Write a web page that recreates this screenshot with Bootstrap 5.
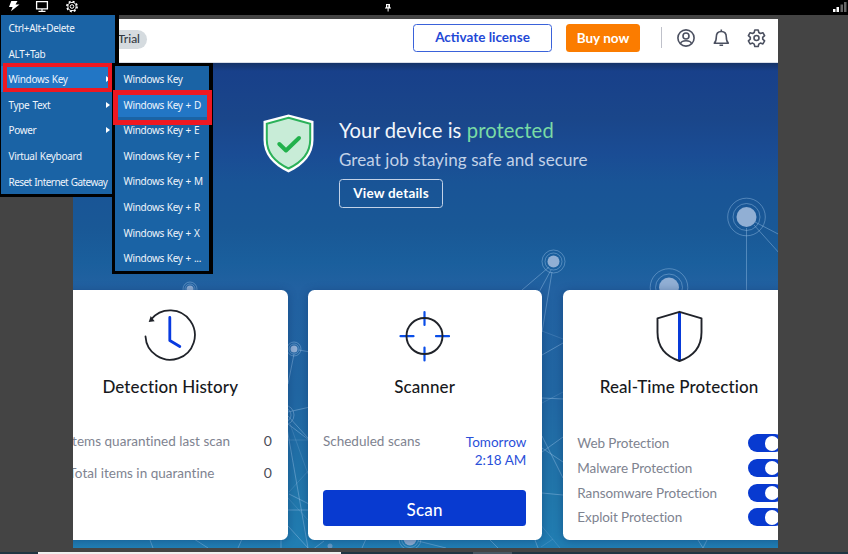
<!DOCTYPE html>
<html lang="en">
<head>
<meta charset="utf-8">
<title>Remote session</title>
<link href="https://cdn.jsdelivr.net/npm/bootstrap@5.3.0/dist/css/bootstrap.min.css" rel="stylesheet">
<script defer src="https://cdn.jsdelivr.net/npm/bootstrap@5.3.0/dist/js/bootstrap.bundle.min.js"></script>
<style>
body{width:848px;height:554px;background:#444;font-family:Lato,"Liberation Sans",sans-serif;font-variant-ligatures:none;line-height:1.2}
svg{display:block;flex:none}
.session-bar{height:15px;background:#000;padding-left:8px}
.remote-app{width:705px;height:529px;margin:4px 0 0 73px}
.app-top{height:44px;padding:0 12px 6px 0;border-bottom:1px solid #d9dee8}
.trial{height:19px;width:74px;margin-top:3px;background:#d5dbdf;color:#343a42;font-size:12px;font-weight:500;padding-right:7px}
.app-btn{--bs-btn-padding-x:0;--bs-btn-padding-y:0;--bs-btn-font-size:13.5px;--bs-btn-font-weight:700;--bs-btn-line-height:1;--bs-btn-border-radius:3.5px;height:28px}
.btn-activate{--bs-btn-color:#1f49d6;--bs-btn-border-color:#3a62da;width:139px;padding-top:1px}
.btn-buy{--bs-btn-bg:#fb7c00;--bs-btn-color:#fff;width:74px;margin-left:14px;padding-top:2px}
.top-rule{width:1px;height:21px;margin:0 15px 0 21px;background:#bfc1ca}
.hero-zone{height:485px;background:linear-gradient(#153368 0,#18408a 8px,#1a468a 55px,#1a4c94 90px,#195496 120px,#195896 165px,#1a5f9d 200px,#2261a1 225px,#2166a2 330px,#2176aa 430px,#217eb3 485px)}
.net-lines{inset:0}
.status-block{padding:50px 0 0 190px;gap:24px;height:227px}
.status-title{font-size:20.2px;line-height:34px;letter-spacing:.1px;color:#f2f6fb}
.status-title span{color:#79dba5}
.status-sub{font-size:17px;line-height:25px;letter-spacing:.08px;color:#c3d2e7}
.btn-view{--bs-btn-color:#fff;--bs-btn-border-color:#c3d2e7;width:104px;height:29px;letter-spacing:.2px;margin-top:7px;padding-top:1px}
.tile-row{gap:20.4px;margin-left:-19px}
.tile{width:234px;height:249.5px;border-radius:6.5px;background:#fff;padding:19px 16px 14px 14.5px;flex:none;box-shadow:0 1px 9px rgba(10,45,100,.4)}
.tile-title{font-size:17px;font-weight:500;line-height:22px;color:#17191d;margin:13px 0 0;letter-spacing:.1px}
.rows{font-size:13.5px;color:#7e8390;letter-spacing:.02px}
.quarantine-first{margin:35px 0 15px}
.schedule{margin-top:35px}
.shields{margin:33px -3px 0 0}
.num{color:#4a4d57;font-size:14px}
.when{color:#2a50d9;line-height:18px}
.btn-scan{--bs-btn-bg:#083ad0;--bs-btn-color:#fff;--bs-btn-font-size:17px;--bs-btn-font-weight:500;height:35.5px;letter-spacing:.2px;padding-top:3px}
.rt-row{height:24.65px;letter-spacing:-.08px}
.toggle{width:36px;height:18px;border-radius:9px;background:#083ad0;padding:2px 4px 2px 17px}
.toggle i{display:block;width:14.5px;height:14.5px;border-radius:50%;background:#fff}
.flyout{color:#eef4fb;font-family:"Noto Sans","Open Sans",sans-serif;font-size:10px;letter-spacing:-.33px;word-spacing:.7px;background:#1a63a5;border:0 solid #000}
.flyout div{height:25.55px;padding:1px 0 0 7.5px;white-space:nowrap}
.flyout .picked{background:#2276c5}
.flyout .tight{letter-spacing:-.57px}
.menu-main{left:0;top:15px;width:119px;height:182px;border-width:0 4px 3px 1px}
.menu-sub{left:112px;top:63px;width:101px;height:211px;border-width:3px 4px 3px 3px}
.menu-sub div{padding-left:8.5px}
.flyout svg{margin-right:5px}
.ring{border:4.5px solid #ee1822}
.ring-a{left:3px;top:63px;width:109px;height:29px}
.ring-b{left:113px;top:90px;width:99px;height:35px;border-width:5px}
.task-strip{height:2px;margin-top:4px;background:#203542}
.task-strip .win-a{width:303px;margin-left:38px;background:#f0f0f0}
.task-strip .win-b{width:39px;margin-left:132px;background:#485864}
</style>
</head>
<body class="position-relative overflow-hidden">
<header class="session-bar position-relative d-flex">
<svg width="840" height="15" viewBox="8 0 840 15">
<path d="M11.3 1h6.200l-2 3.500h4L11 11.300l1.600-4.200H9z" fill="#fff"/>
<path d="M36.600 1.700h10.800v7.200H36.600z" fill="none" stroke="#fff" stroke-width="1.300"/><path d="M42 9v2M38.500 11.300h7" stroke="#fff" stroke-width="1.200"/>
<g fill="none" stroke="#fff"><circle cx="72" cy="6.500" r="4.100"/><circle cx="72" cy="6.500" r="1.800"/><circle cx="72" cy="6.500" r="5.100" stroke-width="1.600" stroke-dasharray="2 2"/></g>
<path d="M386 4h4v4h-4zM385 7.500h6v1h-6zM387.600 8h1v3.500h-1z" fill="#fff"/><path d="M387.300 5h1v2.300h-1z" fill="#000"/>
<path d="M833 9h2.500v3H833zM836.500 7h2.500v5h-2.500z" fill="#fff"/><path d="M840.500 4.500h2.500v7.500h-2.500zM844 2h2.500v10h-2.500z" fill="#666"/>
</svg>
</header>

<main class="remote-app overflow-hidden">
<div class="app-top bg-white d-flex align-items-center">
<span class="trial rounded-pill d-flex align-items-center justify-content-end me-auto">Trial</span>
<button class="btn app-btn btn-activate">Activate license</button>
<button class="btn app-btn btn-buy border-0">Buy now</button>
<span class="top-rule"></span>
<svg width="89" height="20" viewBox="677.500 28 89 20" fill="none" stroke="#4b5060" stroke-width="1.600">
<circle cx="686.500" cy="38" r="8.100"/><circle cx="686.500" cy="36" r="3"/><path d="M681 43.800c.6-2.300 2-3 5.500-3s4.900.7 5.500 3"/>
<path d="M714.800 43.200h14c-1.500-1.300-2-2.700-2-6.200 0-3.400-2-5.500-5-5.500s-5 2.100-5 5.500c0 3.500-.5 4.900-2 6.200zM721.800 29.500v2M720 45.300h3.600" stroke-linejoin="round"/>
<circle cx="757" cy="38" r="2.500"/><path d="M755.300 30h3.400l.6 2.500 1.600 1 2.500-.8 1.700 2.900-1.900 1.800v1.800l1.900 1.700-1.700 3-2.500-.8-1.600 1-.6 2.400h-3.400l-.6-2.400-1.600-1-2.500.8-1.700-3 1.900-1.700v-1.800l-1.900-1.800 1.700-2.900 2.500.8 1.600-1z" stroke-linejoin="round"/>
</svg>
</div>

<section class="hero-zone position-relative">
<svg class="net-lines position-absolute" width="705" height="485" viewBox="73 63 705 485" fill="none" stroke="#9fc5ea" stroke-opacity=".42">
<path d="M746.500 228v64M755 222l25 13M754 225l26 29M549 267l-27 23M551 270l-13 24M552 272l-10 60M542 355l21-12M542 398l22 1M542 436l21 42M542 452l21-15M542 448l21 14M542 493l21 2M294 354l-6 30M299 350l11 2M288 412l22-5M288 416l20 22M288 424l21 16M287 428l21 120M289 494l20 10M288 510h21M288 526l20 22"/>
<path stroke-opacity=".2" d="M542 331l21 8M542 403l21-11M288 440h20M290 424l18 50M289 492l20-22M288 498l20 22M540 524l20 24M541 547l12-8"/>
<path d="M150 540l3 8M194 539l14 9M238 548l4-9M281 539v9M324 541l-12 9M362 548l4-9M418 541l28 7M535 540l3 8M490 540l8 8M698 540l5 8M707 540l-4 8"/>
<circle cx="746.500" cy="217" r="13.500"/><circle cx="746.500" cy="217" r="18.800"/>
<circle cx="669" cy="287.500" r="13.500"/><circle cx="669" cy="287.500" r="18.800"/>
<circle cx="553.500" cy="261.500" r="8.500"/><circle cx="553.500" cy="261.500" r="11.500"/>
<circle cx="294" cy="349" r="5"/><circle cx="294" cy="349" r="7"/><circle cx="190" cy="289" r="5"/><circle cx="190" cy="289" r="7"/>
<circle cx="284" cy="415" r="7"/><circle cx="284" cy="415" r="10"/><circle cx="410" cy="539" r="8.500"/><circle cx="410" cy="539" r="11"/>
<g fill="#91afd4" stroke="none"><circle cx="746.500" cy="217" r="10"/><circle cx="669" cy="287.500" r="10"/><circle cx="553.500" cy="261.500" r="6"/><circle cx="294" cy="349" r="3.500"/><circle cx="190" cy="289" r="3.500"/><circle cx="410" cy="539" r="6.500"/><circle cx="330" cy="546" r="2.500" fill-opacity=".6"/></g>
</svg>
<div class="status-block position-relative d-flex align-items-start">
<svg class="mt-0" width="52" height="60" viewBox="263 113.500 52 60">
<path d="M288.500 115l25 6.500v19c0 14-9 25-25 32.500-16-7.500-25-18.500-25-32.500v-19z" fill="#fff"/>
<path d="M288.500 118.300l21.700 6v16c0 12-7.500 22-21.700 28.700-14.200-6.700-21.700-16.700-21.700-28.700v-16z" fill="#c8ecd7" stroke="#2bb159" stroke-width="2"/>
<path d="M279.300 144.500l6.700 6.500 13-12.500" fill="none" stroke="#22b14c" stroke-width="4" stroke-linecap="round" stroke-linejoin="round"/>
</svg>
<div>
<div class="status-title">Your device is <span>protected</span></div>
<div class="status-sub">Great job staying safe and secure</div>
<button class="btn app-btn btn-view">View details</button>
</div>
</div>

<div class="tile-row position-relative d-flex">
<article class="tile d-flex flex-column">
<svg class="mx-auto" width="52" height="54" viewBox="144.500 309 52 54" fill="none" stroke="#20232a" stroke-width="1.800"><path d="M151.500 319.500A24.700 24.700 0 1 1 146 336.500" stroke-linecap="round"/><path d="M151.500 318l-1 3 3-.4z" fill="#20232a"/><path d="M170.300 317.500v23l10 6" stroke="#083ae0" stroke-width="2.800" stroke-linecap="round" stroke-linejoin="round"/></svg>
<h2 class="tile-title text-center">Detection History</h2>
<div class="rows quarantine-first d-flex justify-content-between"><span>Items quarantined last scan</span><span class="num">0</span></div>
<div class="rows d-flex justify-content-between"><span>Total items in quarantine</span><span class="num">0</span></div>
</article>
<article class="tile d-flex flex-column">
<svg class="mx-auto" width="52" height="54" viewBox="399 309 52 54" fill="none" stroke-width="2.200"><path d="M424.500 312v13M424.500 347.500v13M400.500 336.200h13M436 336.200h13" stroke="#0a4ee8" stroke-linecap="round"/><circle cx="424.500" cy="336" r="18" stroke="#20232a" stroke-width="1.900"/></svg>
<h2 class="tile-title text-center">Scanner</h2>
<div class="rows schedule d-flex justify-content-between"><span>Scheduled scans</span><span class="when text-end">Tomorrow<br>2:18 AM</span></div>
<button class="btn app-btn btn-scan border-0 w-100 mt-auto">Scan</button>
</article>
<article class="tile d-flex flex-column">
<svg class="mx-auto" width="52" height="54" viewBox="653.500 309 52 54" fill="none"><path d="M680 312v49" stroke="#083ad8" stroke-width="3"/><path d="M680 311.800l22 6.500v14c0 14-8 24-22 28.700-14-4.700-22-14.700-22-28.700v-14z" stroke="#20232a" stroke-width="1.900" stroke-linejoin="round"/></svg>
<h2 class="tile-title text-center">Real-Time Protection</h2>
<div class="rows shields">
<div class="rt-row d-flex justify-content-between align-items-center"><span>Web Protection</span><span class="toggle"><i></i></span></div>
<div class="rt-row d-flex justify-content-between align-items-center"><span>Malware Protection</span><span class="toggle"><i></i></span></div>
<div class="rt-row d-flex justify-content-between align-items-center"><span>Ransomware Protection</span><span class="toggle"><i></i></span></div>
<div class="rt-row d-flex justify-content-between align-items-center"><span>Exploit Protection</span><span class="toggle"><i></i></span></div>
</div>
</article>
</div>
</section>
</main>
<footer class="task-strip d-flex"><span class="win-a"></span><span class="win-b"></span></footer>

<nav class="flyout menu-main position-absolute">
<div class="d-flex align-items-center">Ctrl+Alt+Delete</div>
<div class="d-flex align-items-center">ALT+Tab</div>
<div class="picked d-flex align-items-center justify-content-between">Windows Key<svg width="4" height="6"><path d="M0 0l4 3-4 3z" fill="#fff"/></svg></div>
<div class="d-flex align-items-center justify-content-between">Type Text<svg width="4" height="6"><path d="M0 0l4 3-4 3z" fill="#fff"/></svg></div>
<div class="d-flex align-items-center justify-content-between">Power<svg width="4" height="6"><path d="M0 0l4 3-4 3z" fill="#fff"/></svg></div>
<div class="d-flex align-items-center">Virtual Keyboard</div>
<div class="tight d-flex align-items-center">Reset Internet Gateway</div>
</nav>
<nav class="flyout menu-sub position-absolute">
<div class="d-flex align-items-center">Windows Key</div>
<div class="picked d-flex align-items-center">Windows Key + D</div>
<div class="d-flex align-items-center">Windows Key + E</div>
<div class="d-flex align-items-center">Windows Key + F</div>
<div class="d-flex align-items-center">Windows Key + M</div>
<div class="d-flex align-items-center">Windows Key + R</div>
<div class="d-flex align-items-center">Windows Key + X</div>
<div class="d-flex align-items-center">Windows Key + ...</div>
</nav>
<span class="ring ring-a position-absolute"></span>
<span class="ring ring-b position-absolute"></span>
</body>
</html>
